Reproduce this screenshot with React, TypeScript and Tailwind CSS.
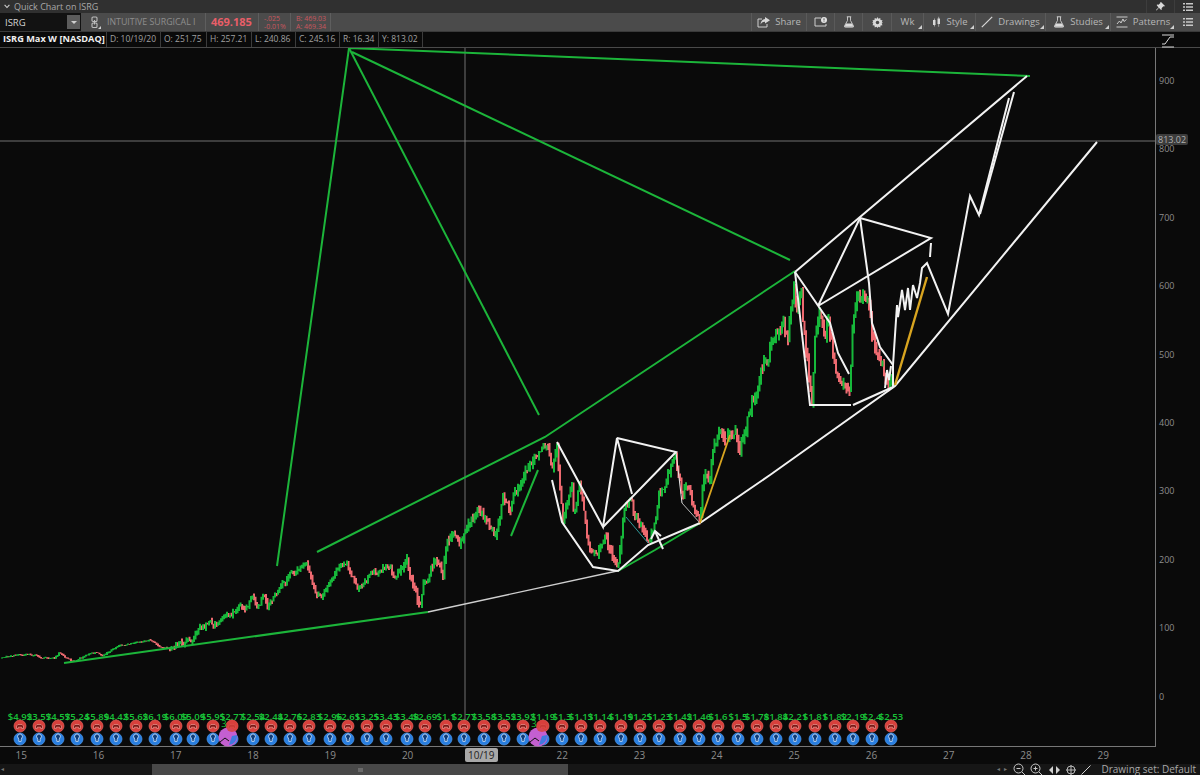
import type { ReactNode } from 'react';

// price path of the chart, read off the picture (x, screen y), chart starts 48px down
const pricePath: [number, number][] = [
  [2, 658], [17, 655], [37, 655], [40, 658], [55, 658], [59, 653], [73, 661], [97, 652], [102, 656], [117, 647], [138, 642],
  [150, 640], [163, 648], [173, 647], [193, 638], [203, 625], [218, 623], [240, 605], [245, 613], [253, 593], [256, 607],
  [265, 595], [268, 605], [280, 587], [290, 575], [306, 565], [315, 590], [323, 595], [335, 572], [347, 563], [358, 590],
  [375, 572], [387, 567], [395, 575], [407, 558], [412, 580], [420, 612], [424, 582], [435, 562], [443, 572], [447, 537],
  [455, 530], [460, 548], [465, 528], [480, 508], [495, 538], [503, 500], [510, 510], [520, 480], [530, 462], [547, 445],
  [552, 470], [557, 447], [563, 520], [572, 488], [573, 515], [580, 485], [588, 547], [597, 553], [605, 530], [610, 553],
  [618, 570], [625, 513], [632, 502], [633, 515], [648, 542], [657, 520], [658, 490], [665, 482], [675, 452], [682, 490],
  [688, 485], [700, 520], [703, 480], [710, 467], [717, 440], [723, 430], [735, 425], [740, 445], [750, 405], [765, 362],
  [773, 340], [783, 317], [788, 340], [794, 287], [797, 310], [802, 285], [803, 320], [808, 363], [812, 403], [815, 333],
  [820, 310], [825, 340], [828, 323], [837, 370], [843, 383], [850, 402], [853, 320], [858, 300], [868, 297], [872, 337],
  [880, 357], [888, 387], [893, 373],
];

function buildCandles() {
  let seed = 77;
  const rnd = () => {
    seed = (seed * 1664525 + 1013904223) % 4294967296;
    return seed / 4294967296;
  };
  let green = '';
  let red = '';
  let idx = 0;
  let prev = pricePath[0][1] - 48;
  let drift = 0;
  for (let x = 2; x < 893; x += 1.5) {
    while (pricePath[idx + 1][0] < x) idx++;
    const [x0, y0] = pricePath[idx];
    const [x1, y1] = pricePath[idx + 1];
    const base = y0 - 48 + ((y1 - y0) * (x - x0)) / (x1 - x0);
    const vol = x < 170 ? 0.8 : x < 400 ? 3 : x < 700 ? 5 : 7;
    drift = drift * 0.6 + (rnd() - 0.5) * vol * 1.8;
    const close = base + drift;
    const top = Math.min(prev, close) - rnd() * vol;
    const bottom = Math.max(prev, close) + rnd() * vol;
    const seg = `M${x.toFixed(1)} ${top.toFixed(1)}V${bottom.toFixed(1)}`;
    if (close <= prev) green += seg;
    else red += seg;
    prev = close;
  }
  return { green, red };
}

const candles = buildCandles();

// chart coordinates = screenshot y - 48
const greenLines = [
  '277,518 349,0 1030,28',
  '349,0 539,367',
  '352,4 790,212',
  '317,504 545,389 795,223',
  '64,615 428,564',
  '511,488 538,422',
  '618,523 655,502 700,475',
];

const whiteLines = [
  '557,394 603,479 617,390 632,446',
  '617,390 676,404 603,479',
  '552,432 562,474 593,519 618,523 648,497 700,475',
  '700,475 770,427 895,338 1097,94',
  '795,224 860,169 1027,28',
  '818,258 860,170 931,190 818,258',
  '860,170 869,235 872,275 880,299 893,317',
  '795,224 819,259 830,275 838,305 849,326',
  '795,224 810,357 851,357',
  '853,357 893,339',
  '931,195 930,209',
  '893,339 893,317 897,257 898,269 902,242 905,262 908,240 910,262 913,237 917,250 920,235 922,220 927,215 948,266 970,148 979,167 1009,50',
  '980,166 1014,44',
  '885,340 887,322 889,332 891,318',
  '663,501 655,483',
  '651,491 655,483 661,488',
];

const earnings: [number, string][] = [
  [20, '$4.92'], [39, '$3.57'], [58, '$4.57'], [77, '$5.24'], [97, '$5.89'], [116, '$4.42'], [136, '$5.62'], [155, '$6.19'],
  [176, '$6.09'], [193, '$5.09'], [213, '$5.95'], [232, '$2.77'], [253, '$2.54'], [271, '$2.44'], [290, '$2.76'], [309, '$2.83'],
  [330, '$2.96'], [348, '$2.61'], [367, '$3.25'], [386, '$3.43'], [407, '$3.48'], [425, '$2.69'], [446, '$1.1'], [464, '$2.77'],
  [484, '$3.58'], [504, '$3.52'], [523, '$3.92'], [543, '$1.19'], [562, '$1.3'], [581, '$1.13'], [600, '$1.14'], [621, '$1.19'],
  [640, '$1.25'], [659, '$1.23'], [680, '$1.42'], [699, '$1.46'], [718, '$1.6'], [738, '$1.5'], [757, '$1.78'], [776, '$1.84'],
  [795, '$2.21'], [815, '$1.81'], [835, '$1.82'], [853, '$2.19'], [872, '$2.4'], [891, '$2.53'],
];

const priceTicks = ['900', '800', '700', '600', '500', '400', '300', '200', '100', '0'];
const timeTicks = ['15', '16', '17', '18', '19', '20', '', '22', '23', '24', '25', '26', '27', '28', '29'];

function EventMarks({ x }: { x: number }) {
  return (
    <g>
      <circle cx={x} cy={678} r={6} fill="#d8403c" stroke="#e8635c" strokeWidth={0.7} />
      <path d={`M${x - 3.5} ${680.5}v-2.500l1.500 -1.500h4l1.500 1.500v2.500h-1.800v-1.300h-3.400v1.300z`} fill="#7a1a18" stroke="#f4a8a0" strokeWidth={0.6} />
      <circle cx={x} cy={691} r={6} fill="#2a7fe0" stroke="#4c9af0" strokeWidth={0.7} />
      <path d={`M${x - 1.8} ${690}a2.400 2.400 0 1 1 3.600 0l-.6 1.600v1.800h-2.400v-1.800z`} fill="#0f3c78" stroke="#d6e8fc" strokeWidth={0.8} />
    </g>
  );
}

function DividendMark({ x }: { x: number }) {
  return (
    <g>
      <circle cx={x} cy={689} r={9.5} fill="#c45fd0" />
      <circle cx={x + 4} cy={678} r={6} fill="#d8403c" opacity={0.85} />
      <path d={`M${x - 8} ${694}l5 -4 4 3`} fill="none" stroke="#111" strokeWidth={1} />
      <path d={`M${x + 1} ${697}a9 9 0 0 0 8 -10l-5 1z`} fill="#2a7fe0" opacity={0.85} />
      <text x={x - 4} y={679} fontSize={9.5} fill="#18c238" textAnchor="middle">3</text>
    </g>
  );
}

function Chart() {
  return (
    <svg className="block w-[1155px] h-[699px]" viewBox="0 0 1155 699">
      <line x1="0" y1="93" x2="1155" y2="93" stroke="#8a8a8a" strokeWidth="0.8" />
      <line x1="465" y1="0" x2="465" y2="699" stroke="#8a8a8a" strokeWidth="0.8" />
      <path d={candles.red} stroke="#ee6a70" strokeWidth="2" fill="none" />
      <path d={candles.green} stroke="#16b83a" strokeWidth="2" fill="none" />
      {greenLines.map((p) => (
        <polyline key={p} points={p} fill="none" stroke="#1cb53a" strokeWidth="2" />
      ))}
      <line x1="428" y1="564" x2="617" y2="523" stroke="#cfcfcf" strokeWidth="1.4" />
      <line x1="676" y1="404" x2="682" y2="455" stroke="#e8e8e8" strokeWidth="1" />
      <line x1="682" y1="455" x2="700" y2="475" stroke="#b8b8b8" strokeWidth="1" />
      <line x1="626" y1="469" x2="648" y2="495" stroke="#2f9a9a" strokeWidth="1" />
      {whiteLines.map((p) => (
        <polyline key={p} points={p} fill="none" stroke="#f2f2f2" strokeWidth="2" />
      ))}
      <line x1="700" y1="475" x2="730" y2="387" stroke="#d9a520" strokeWidth="1.8" />
      <line x1="895" y1="337" x2="927" y2="229" stroke="#d9a520" strokeWidth="2.4" />
      {earnings.map(([x, label]) => (
        <text key={x} x={x} y={672} fontSize={9.5} fontWeight={600} fill="#18c238" textAnchor="middle">{label}</text>
      ))}
      {earnings.map(([x]) => (
        <EventMarks key={x} x={x} />
      ))}
      <DividendMark x={228} />
      <DividendMark x={538} />
    </svg>
  );
}

function Corner() {
  return <span className="absolute right-[1px] bottom-[2px] w-0 h-0 border-l-[4px] border-b-[4px] border-l-transparent border-b-[#cfcfcf]" />;
}

function ToolBtn({ w, children, corner }: { w: string; children: ReactNode; corner?: boolean }) {
  return (
    <div className={`${w} relative h-full flex items-center justify-center gap-[5px] border-l border-[#5a5a5a] text-[9.500px] text-[#b8b8b8]`}>
      {children}
      {corner && <Corner />}
    </div>
  );
}

function TitleIcons() {
  return (
    <div className="flex items-center h-full">
      <div className="w-[28px] h-full flex items-center justify-center border-l border-[#3d3d3d]">
        <svg width="9" height="9" viewBox="0 0 9 9"><path d="M5 0l4 4-1 .6-.7-.3-1.700 1.900.2 1.300-.7.6-2.200-2.300L.6 8.400 0 8l2.500-2.600L.6 3.100l.7-.6 1.200.2 1.900-1.700L4.200 .3z" fill="#d8d8d8" /></svg>
      </div>
      <div className="w-[26px] h-full flex items-center justify-center border-l border-[#3d3d3d]">
        <MenuLines />
      </div>
    </div>
  );
}

function MenuLines() {
  return (
    <svg width="10" height="10" viewBox="0 0 10 10" fill="#c8c8c8">
      <path d="M0 1h2v1.400H0zM3 1h7v1.400H3zM0 4.300h2v1.400H0zM3 4.300h7v1.400H3zM0 7.600h2V9H0zM3 7.600h7V9H3z" />
    </svg>
  );
}

function Flask({ size = 12 }: { size?: number }) {
  return (
    <svg width={size} height={size} viewBox="0 0 12 12">
      <path d="M4.500 1v3.500L1.500 10q-.4 1.200.8 1.200h7.400q1.200 0 .8-1.200l-3-5.500V1" fill="none" stroke="#cfcfcf" strokeWidth="0.9" />
      <path d="M3.800 .8h4.400" stroke="#cfcfcf" strokeWidth="1" />
      <path d="M3 7.500h6l1.500 3.200h-9z" fill="#dcdcdc" />
    </svg>
  );
}

function QuoteBar() {
  return (
    <div className="h-[19px] flex items-stretch bg-[#4b4b4b] border-b border-[#3a3a3a]">
      <div className="w-[81px] flex bg-[#121212]">
        <div className="flex-1 pl-[5px] text-[9.500px] leading-[19px] text-[#d4d4d4]">ISRG</div>
        <div className="w-[13px] my-[2px] mr-[1px] bg-[#5c5c5c] flex items-center justify-center">
          <span className="w-0 h-0 border-x-[3px] border-t-[3px] border-x-transparent border-t-[#cfcfcf]" />
        </div>
      </div>
      <div className="w-[26px] flex items-center justify-center relative">
        <svg width="7" height="13" viewBox="0 0 7 13" fill="none" stroke="#bdbdbd" strokeWidth="1.100">
          <rect x="1" y="1" width="5" height="4.500" rx="1" />
          <rect x="1" y="7" width="5" height="4.500" rx="1" />
          <path d="M3.500 4v4.500" />
        </svg>
        <span className="absolute right-[6px] bottom-[2px] w-0 h-0 border-l-[3px] border-b-[3px] border-l-transparent border-b-[#cfcfcf]" />
      </div>
      <div className="w-[98px] text-[8.800px] leading-[18px] text-[#8e8e8e] whitespace-nowrap">INTUITIVE SURGICAL I</div>
      <div className="w-[53px] pl-[5px] border-l border-[#5e5e5e] text-[11px] font-bold leading-[18px] text-[#e85e68]">469.185</div>
      <div className="w-[32px] pl-[5px] border-l border-[#5e5e5e] text-[7px] leading-[8px] pt-[2px] text-[#c9565e]">
        <div>-.025</div>
        <div>-0.01%</div>
      </div>
      <div className="w-[41px] pl-[5px] border-x border-[#5e5e5e] text-[7px] leading-[8px] pt-[2px] text-[#c9565e] whitespace-nowrap">
        <div>B: 469.03</div>
        <div>A: 469.34</div>
      </div>
      <div className="flex-1" />
      <ToolBtn w="w-[55px]">
        <svg width="13" height="11" viewBox="0 0 13 11" fill="none">
          <path d="M5 2H1v8h9V7" stroke="#cfcfcf" strokeWidth="1" />
          <path d="M8 0l5 3.200L8 6.500V4.700Q5 4.500 3.500 7.500 4 2.500 8 2z" fill="#d8d8d8" />
        </svg>
        <span>Share</span>
      </ToolBtn>
      <ToolBtn w="w-[28px]">
        <svg width="13" height="10" viewBox="0 0 13 10" fill="none">
          <path d="M7 1H1v8h11V7" stroke="#cfcfcf" strokeWidth="1" />
          <circle cx="10" cy="3" r="3" fill="#e2e2e2" />
          <path d="M10 1.300v2.200M10 4v.6" stroke="#333" strokeWidth="0.8" />
        </svg>
      </ToolBtn>
      <ToolBtn w="w-[28px]"><Flask /></ToolBtn>
      <ToolBtn w="w-[29px]">
        <svg width="11" height="11" viewBox="0 0 12 12">
          <path d="M6 0l1 2 2-.9.300 2.200 2.200.300L10.600 5.600 12 6l-1.400 1 .9 2-2.200.300L9 11.500l-2-1L6 12l-1-1.500-2 1-.300-2.200-2.200-.300L1.400 7 0 6l1.400-.4-.9-2 2.200-.300L3 1.100l2 .9z" fill="#d8d8d8" />
          <circle cx="6" cy="6" r="1.900" fill="#4b4b4b" />
        </svg>
      </ToolBtn>
      <ToolBtn w="w-[32px]" corner><span>Wk</span></ToolBtn>
      <ToolBtn w="w-[52px]" corner>
        <svg width="10" height="12" viewBox="0 0 10 12" fill="#d8d8d8">
          <path d="M2 4h2.500v5H2zM3 2.500h.6v8H3zM6.500 2.500H9V8H6.500zM7.500 .8h.6v10h-.6z" />
        </svg>
        <span>Style</span>
      </ToolBtn>
      <ToolBtn w="w-[70px]" corner>
        <svg width="12" height="12" viewBox="0 0 12 12"><path d="M.8 11.200L11.200 .8" stroke="#d8d8d8" strokeWidth="1.200" /></svg>
        <span>Drawings</span>
      </ToolBtn>
      <ToolBtn w="w-[65px]" corner>
        <Flask />
        <span>Studies</span>
      </ToolBtn>
      <ToolBtn w="w-[65px]" corner>
        <svg width="12" height="12" viewBox="0 0 12 12" fill="none" stroke="#d8d8d8" strokeWidth="0.900">
          <path d="M.5 1h11M.5 11h11M1 8l2.500-3 1.500 2 2-4 1 2.500 2.500-2" />
        </svg>
        <span>Patterns</span>
      </ToolBtn>
      <div className="w-[25px] flex items-center justify-center"><MenuLines /></div>
    </div>
  );
}

function InfoBar() {
  const cells: [string, string][] = [
    ['w-[54px]', 'D: 10/19/20'],
    ['w-[46px]', 'O: 251.75'],
    ['w-[45px]', 'H: 257.21'],
    ['w-[44px]', 'L: 240.86'],
    ['w-[44px]', 'C: 245.16'],
    ['w-[39px]', 'R: 16.34'],
    ['w-[44px]', 'Y: 813.02'],
  ];
  return (
    <div className="h-[16px] flex bg-[#0a0a0a] border-b border-[#4a4a4a] text-[8.500px] leading-[14px] whitespace-nowrap">
      <div className="w-[107px] pl-[3px] text-[9.200px] font-bold text-[#f0f0f0] border-r border-[#3c3c3c]">ISRG Max W [NASDAQ]</div>
      {cells.map(([w, t]) => (
        <div key={t} className={`${w} pl-[3px] text-[#a0a0a0] border-r border-[#3c3c3c]`}>{t}</div>
      ))}
    </div>
  );
}

export default function App() {
  return (
    <div className="w-[1200px] h-[775px] flex flex-col overflow-hidden bg-[#0a0a0a] font-['Open_Sans',sans-serif]">
      <div className="h-[13px] flex items-center justify-between bg-[#303030]">
        <div className="flex items-center gap-[4px] pl-[4px] text-[9px] text-[#a8a8a8]">
          <svg width="6" height="5" viewBox="0 0 7 5"><path d="M.7 .7l2.800 3 2.800-3" fill="none" stroke="#d0d0d0" strokeWidth="1.300" /></svg>
          <span>Quick Chart on ISRG</span>
        </div>
        <TitleIcons />
      </div>
      <QuoteBar />
      <InfoBar />
      <div className="flex h-[699px]">
        <div className="w-[1156px] h-full shrink-0 border-r border-b border-[#777]">
          <Chart />
        </div>
        <div className="relative flex-1 flex flex-col">
          <svg className="ml-[5px] mt-[-14px] shrink-0" width="14" height="14" viewBox="0 0 14 14" fill="none" stroke="#d8d8d8" strokeWidth="1">
            <path d="M1 1h12M1 13h12M1 10h3l5-7h4" />
          </svg>
          <div className="h-[27px] shrink-0" />
          {priceTicks.map((p) => (
            <div key={p} className="h-[68.400px] shrink-0 pl-[3px] text-[9px] leading-[12px] text-[#8e8e8e]">{p}</div>
          ))}
          <div className="absolute left-0 top-[86px] h-[11px] px-[2px] bg-[#3c3c3c] rounded-[2px] text-[9px] leading-[11px] text-[#b0b0b0]">813.02</div>
        </div>
      </div>
      <div className="relative h-[17px] flex text-[10px] leading-[16px] text-[#8c8c8c]">
        {timeTicks.map((t, i) => (
          <div key={i} className="w-[77.300px] shrink-0 text-center first:ml-[-17.500px]">{t}</div>
        ))}
        <div className="absolute left-[465px] top-[1px] h-[14px] px-[3px] rounded-[2px] bg-[#a8a8a8] text-[#222] text-[10px] leading-[14px]">10/19</div>
      </div>
      <div className="h-[11px] flex bg-[#161616]">
        <div className="w-[152px] pl-[1px] text-[6px] leading-[11px] text-[#777]">◂</div>
        <div className="w-[416px] flex items-center justify-center bg-[#484848]">
          <span className="w-[5px] h-[4px] border-x border-[#6a6a6a] bg-[#6a6a6a]" />
        </div>
        <div className="flex-1" />
        <div className="flex items-center gap-[4px] pr-[4px] text-[10px] text-[#a8a8a8]">
          <span className="text-[6px] text-[#777]">◂</span>
          <span className="text-[6px] text-[#777] mr-[2px]">▸</span>
          <svg width="13" height="13" viewBox="0 0 13 13" fill="none" stroke="#c8c8c8" strokeWidth="1"><circle cx="5.500" cy="5.500" r="4.500" /><path d="M3.500 5.500h4M9 9l3.500 3.500" /></svg>
          <svg width="13" height="13" viewBox="0 0 13 13" fill="none" stroke="#c8c8c8" strokeWidth="1"><circle cx="5.500" cy="5.500" r="4.500" /><path d="M3.500 5.500h4M5.500 3.500v4M9 9l3.500 3.500" /></svg>
          <svg className="ml-[2px]" width="11" height="8" viewBox="0 0 11 8" fill="#d0d0d0"><path d="M0 4l4-4v8zM11 4L7 0v8z" /></svg>
          <svg className="ml-[2px]" width="10" height="10" viewBox="0 0 10 10" fill="none" stroke="#c8c8c8" strokeWidth="0.900"><circle cx="5" cy="5" r="4" /><path d="M5 0v10M0 5h10" /></svg>
          <svg className="ml-[1px]" width="10" height="10" viewBox="0 0 10 10"><path d="M.5 9.500L9.500 .5" stroke="#d0d0d0" strokeWidth="1" /></svg>
          <span className="ml-[6px] whitespace-nowrap leading-[11px]">Drawing set: Default</span>
        </div>
      </div>
    </div>
  );
}
